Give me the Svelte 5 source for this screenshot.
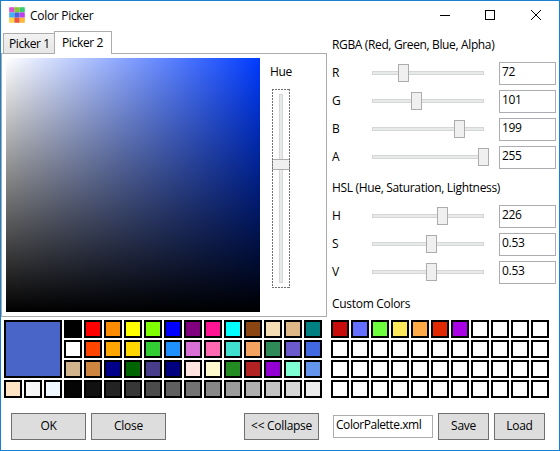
<script>
  const palette = [
    ['#000000', '#ff0000', '#ff8c00', '#ffff00', '#7fff00', '#0000ff', '#800080', '#ff1493', '#00ffff', '#8b4513', '#f5deb3', '#deb887', '#008080'],
    ['#ffffff', '#ff4500', '#ffa500', '#ffd700', '#32cd32', '#1e90ff', '#da70d6', '#ff69b4', '#40e0d0', '#f4a460', '#2e8b57', '#6a5acd', '#4169e1'],
    ['#d2b48c', '#cd853f', '#00008b', '#006400', '#483d8b', '#000080', '#ffe4e1', '#fffacd', '#228b22', '#b22222', '#9400d3', '#7fffd4', '#6495ed'],
    ['#050505', '#111111', '#232323', '#373737', '#4b4b4b', '#5f5f5f', '#737373', '#878787', '#9b9b9b', '#afafaf', '#c3c3c3', '#d7d7d7', '#ebebeb'],
  ];
  const extras = ['#ffe4c4', '#f5f5f5', '#f0f8ff'];
  const saved = ['#c80c0c', '#646eff', '#6eff3c', '#ffe95a', '#ffaa46', '#e12800', '#aa00e6'];
  const custom = Array.from({ length: 44 }, (_, i) => saved[i] ?? '#ffffff');
  const groups = [
    {
      title: 'RGBA (Red, Green, Blue, Alpha)', cls: 'rgba',
      rows: [
        { name: 'R', value: '72', pos: 26 },
        { name: 'G', value: '101', pos: 39 },
        { name: 'B', value: '199', pos: 82 },
        { name: 'A', value: '255', pos: 106 },
      ],
    },
    {
      title: 'HSL (Hue, Saturation, Lightness)', cls: 'hsl',
      rows: [
        { name: 'H', value: '226', pos: 65 },
        { name: 'S', value: '0.53', pos: 54 },
        { name: 'V', value: '0.53', pos: 54 },
      ],
    },
  ];
  const tiles = ['#e04fd0', '#84cc2c', '#35cf70', '#3fb4f5', '#4a62e0', '#c03cf0', '#ffd54a', '#f0553a', '#ffb733'];
</script>

<div class="window">
  <header>
    <svg class="logo" width="16" height="16" viewBox="0 0 16 16">
      <rect x=".5" y=".5" width="15" height="15" fill="#c9c3cf" />
      {#each tiles as c, i}
        <rect x={(i % 3) * 5.25 + 0.25} y={Math.floor(i / 3) * 5.25 + 0.25} width="5" height="5" rx="0.6" fill={c} />
      {/each}
    </svg>
    <span class="title">Color Picker</span>
    <svg class="controls" width="104" height="12" viewBox="0 0 104 12" fill="none" stroke="#000" shape-rendering="crispEdges">
      <path d="M0 5.5H10M45.5 .5H54.5V9.5H45.5Z" />
      <path d="M91 0L101 10M101 0L91 10" shape-rendering="auto" />
    </svg>
  </header>

  <div class="main">
    <section class="left">
      <nav>
        <div class="tab first"><span>Picker 1</span></div>
        <div class="tab active"><span>Picker 2</span></div>
      </nav>
      <div class="panel">
        <div class="field"></div>
        <div class="hue">
          <span class="label">Hue</span>
          <div class="vslider"><i class="vtrack"></i><i class="vthumb"></i><i class="focus"></i></div>
        </div>
      </div>
    </section>
    <section class="right">
      {#each groups as g}
        <div class="heading {g.cls}"><span>{g.title}</span></div>
        <div class="rows">
          {#each g.rows as r}
            <div class="row">
              <span class="name">{r.name}</span>
              <div class="slider"><i class="thumb" style="left:{r.pos}px"></i></div>
              <div class="box">{r.value}</div>
            </div>
          {/each}
        </div>
      {/each}
      <div class="heading custom-title"><span>Custom Colors</span></div>
    </section>
  </div>

  <div class="swatches">
    <div class="current">
      <i class="big"></i>
      <div class="extras">
        {#each extras as c}<i class="sw" style="background:{c}"></i>{/each}
      </div>
    </div>
    <div class="grid std">
      {#each palette.flat() as c}<i class="sw" style="background:{c}"></i>{/each}
    </div>
    <div class="grid custom">
      {#each custom as c}<i class="sw" style="background:{c}"></i>{/each}
    </div>
  </div>

  <footer>
    <button>OK</button>
    <button>Close</button>
    <button class="collapse">&lt;&lt; Collapse</button>
    <div class="box file">ColorPalette.xml</div>
    <button class="small">Save</button>
    <button class="small">Load</button>
  </footer>
</div>

<style>
  :global(body) { margin: 0; }
  .window, .window * { box-sizing: border-box; }
  .window {
    width: 560px; height: 451px; border: 1px solid #1a80d2; background: #fff; color: #000;
    font: 12px/16px "Open Sans", "Noto Sans", sans-serif; letter-spacing: -0.3px;
    display: flex; flex-direction: column; overflow: hidden; white-space: nowrap;
  }
  i { display: block; }
  header { height: 30px; flex: none; display: flex; padding: 6px 0 0 8px; }
  .logo { flex: none; }
  .title { margin: 1px 0 0 5px; width: 410px; }
  .controls { margin-top: 3px; flex: none; }
  .main { display: flex; height: 286px; flex: none; }
  .left { width: 326px; flex: none; }
  nav { display: flex; align-items: flex-end; height: 23px; padding-left: 2px; position: relative; z-index: 1; }
  .tab { border: 1px solid #acacac; border-bottom: 0; }
  .first { width: 51px; height: 20px; border-right: 0; background: linear-gradient(#f2f2f2, #e6e6e6); padding: 2px 0 0 5px; margin-bottom: 1px; letter-spacing: -0.4px; }
  .active { width: 58px; height: 23px; background: #fff; padding: 3px 0 0 7px; letter-spacing: -0.35px; }
  .panel { margin-top: -1px; height: 264px; border: 1px solid #acacac; display: flex; padding: 4px; }
  .field {
    width: 254px; height: 254px; flex: none;
    background: linear-gradient(to bottom, transparent, #000), linear-gradient(to right, #fff, #003bff);
  }
  .hue { padding: 6px 0 0 10px; }
  .label { display: block; height: 16px; }
  .vslider { width: 18px; height: 199px; margin: 9px 0 0 2px; position: relative; padding: 5px 0 0 7px; }
  .focus {
    position: absolute; inset: 0;
    background:
      repeating-linear-gradient(90deg, #707070 0 2px, transparent 2px 3px) top / 100% 1px no-repeat,
      repeating-linear-gradient(90deg, #707070 0 2px, transparent 2px 3px) bottom / 100% 1px no-repeat,
      repeating-linear-gradient(#707070 0 2px, transparent 2px 3px) left / 1px 100% no-repeat,
      repeating-linear-gradient(#707070 0 2px, transparent 2px 3px) right / 1px 100% no-repeat;
  }
  .vtrack { width: 4px; height: 189px; border: 1px solid #d6d6d6; background: #e7eaea; }
  .vthumb { position: absolute; left: 0; top: 70px; width: 18px; height: 11px; border: 1px solid #acacac; background: #f0f0f0; }
  .right { padding: 5px 0 0 5px; width: 232px; }
  .heading { height: 26px; padding-top: 1px; }
  .rgba { letter-spacing: -0.36px; }
  .rows { display: grid; row-gap: 5px; }
  .row { display: flex; height: 23px; }
  .name { width: 40px; padding-top: 3px; }
  .slider { width: 112px; height: 4px; margin-top: 9px; border: 1px solid #d6d6d6; background: #e7eaea; position: relative; }
  .thumb { position: absolute; top: -8px; margin-left: -1px; width: 11px; height: 18px; border: 1px solid #acacac; background: #f0f0f0; }
  .box { width: 57px; height: 23px; border: 1px solid #abadb3; padding: 1px 0 0 2px; margin-left: 15px; }
  .hsl { height: 36px; padding-top: 11px; letter-spacing: -0.33px; }
  .custom-title { padding-top: 12px; }
  .swatches { display: flex; padding: 3px 0 0 3px; height: 81px; flex: none; }
  .current { width: 60px; }
  .big { width: 58px; height: 58px; border: 2px solid #000; background: #4865c7; }
  .extras { display: flex; gap: 2px; margin-top: 2px; }
  .sw { width: 18px; height: 18px; border: 2px solid #000; }
  .grid { display: grid; gap: 2px; align-content: start; }
  .std { grid-template-columns: repeat(13, 18px); }
  .custom { grid-template-columns: repeat(11, 18px); margin-left: 9px; }
  footer { display: flex; padding: 15px 0 0 10px; }
  button {
    width: 75px; height: 27px; padding: 0 0 1px; margin: 0 5px 0 0; border: 1px solid #707070; border-radius: 0;
    background: #ddd; color: #000; font: inherit; letter-spacing: inherit; flex: none;
  }
  .collapse { margin: 0 14px 0 73px; }
  .file { width: 100px; margin: 2px 5px 0 0; padding-left: 2px; letter-spacing: -0.45px; }
  .small { width: 51px; }
</style>
